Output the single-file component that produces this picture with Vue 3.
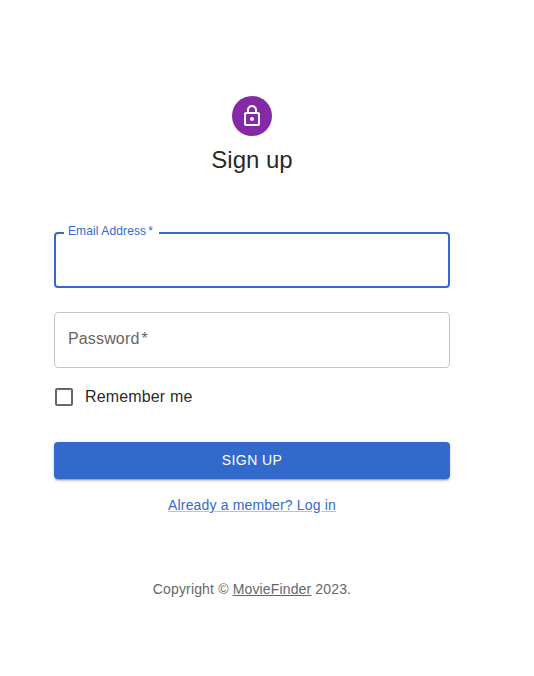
<script setup>
import { ref } from 'vue'
const email = ref('')
const password = ref('')
</script>

<template>
  <main class="page">
    <div class="avatar">
      <svg viewBox="0 0 24 24" width="24" height="24" fill="currentColor">
        <path d="M12 17c1.1 0 2-.9 2-2s-.9-2-2-2-2 .9-2 2 .9 2 2 2zm6-9h-1V6c0-2.76-2.24-5-5-5S7 3.24 7 6v2H6c-1.1 0-2 .9-2 2v10c0 1.1.9 2 2 2h12c1.1 0 2-.9 2-2V10c0-1.1-.9-2-2-2zM9 6c0-1.66 1.34-3 3-3s3 1.34 3 3v2H9V6zm9 14H6V10h12v10z" />
      </svg>
    </div>
    <h1>Sign up</h1>
    <form @submit.prevent>
      <div class="field focused">
        <input id="email" v-model="email" />
        <label for="email">Email Address<span class="star">*</span></label>
      </div>
      <div class="field">
        <input id="password" v-model="password" type="password" />
        <label for="password">Password<span class="star">*</span></label>
      </div>
      <div class="remember">
        <span class="box"></span>
        <span class="remember-text">Remember me</span>
      </div>
      <button type="submit">SIGN UP</button>
      <a class="login" href="#">Already a member? Log in</a>
    </form>
    <p class="copy">Copyright © <a href="#">MovieFinder</a> 2023.</p>
  </main>
</template>

<style>
body { background: #fff; }
</style>

<style scoped>
.page {
  width: 396px;
  margin-left: 54px;
  padding-top: 96px;
  display: flex;
  flex-direction: column;
  align-items: center;
  font-family: "Liberation Sans", Arial, sans-serif;
  color: rgba(0, 0, 0, 0.87);
}
.avatar {
  width: 40px;
  height: 40px;
  border-radius: 50%;
  background: #8529a6;
  color: #fff;
  display: flex;
  align-items: center;
  justify-content: center;
}
h1 {
  margin: 8px 0 0;
  font-size: 24px;
  font-weight: 400;
  line-height: 32px;
}
form {
  width: 100%;
  margin-top: 56px;
  display: flex;
  flex-direction: column;
}
.field {
  position: relative;
  height: 56px;
  box-sizing: border-box;
  border: 1px solid #c4c4c4;
  border-radius: 4px;
  margin-bottom: 24px;
}
.field.focused { border: 2px solid #3369cd; }
.field input {
  width: 100%;
  height: 100%;
  box-sizing: border-box;
  padding: 0 14px;
  border: 0;
  outline: 0;
  background: transparent;
  font: inherit;
}
.field label {
  position: absolute;
  left: 13px;
  top: 14px;
  font-size: 16px;
  line-height: 23px;
  letter-spacing: 0.15px;
  color: #666;
  white-space: nowrap;
}
.field.focused label {
  left: 8px;
  top: -12px;
  padding: 0 6px 0 4px;
  background: #fff;
  color: #3369cd;
  font-size: 12px;
  line-height: 18px;
  letter-spacing: 0.11px;
}
.star { margin-left: 2px; }
.remember {
  display: flex;
  align-items: center;
  height: 24px;
  margin-top: -7px;
}
.box {
  width: 18px;
  height: 18px;
  box-sizing: border-box;
  margin-left: 1px;
  border: 2px solid #666;
  border-radius: 2px;
}
.remember-text {
  margin-left: 12px;
  font-size: 16px;
  letter-spacing: 0.15px;
}
button {
  height: 37px;
  margin-top: 33px;
  padding: 0 6px 2px;
  border: 0;
  border-radius: 4px;
  background: #3369cd;
  color: #fff;
  font: 14px/24px "Liberation Sans", Arial, sans-serif;
  letter-spacing: 0.4px;
  box-shadow: 0 3px 1px -2px rgba(0,0,0,.2), 0 2px 2px rgba(0,0,0,.14), 0 1px 5px rgba(0,0,0,.12);
}
.login {
  align-self: center;
  margin-top: 16px;
  font-size: 14px;
  line-height: 20px;
  letter-spacing: 0.15px;
  color: #3369cd;
  text-decoration-color: rgba(51, 105, 205, 0.4);
}
.copy {
  margin: 64px 0 0;
  font-size: 14px;
  line-height: 20px;
  letter-spacing: 0.15px;
  color: #666;
}
.copy a { color: inherit; }
</style>
